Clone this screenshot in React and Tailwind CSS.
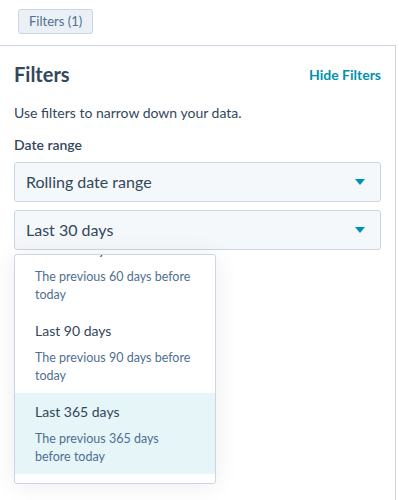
import React from 'react';

const font = { fontFamily: 'Lato, "Open Sans", sans-serif' };

function Caret() {
  return (
    <svg width="10" height="6" viewBox="0 0 10 6" className="shrink-0">
      <path d="M0 0h10L5 6z" fill="#0091ae" />
    </svg>
  );
}

function Select({ label }) {
  return (
    <div className="h-[40px] rounded-[3px] border border-[#cbd6e2] bg-[#f5f8fa] flex items-center justify-between pl-[11px] pr-[15px]">
      <span className="text-[16px] text-[#33475b] leading-[22px]">{label}</span>
      <Caret />
    </div>
  );
}

const options = [
  { title: 'Last 60 days', desc: ['The previous 60 days before', 'today'] },
  { title: 'Last 90 days', desc: ['The previous 90 days before', 'today'] },
  { title: 'Last 365 days', desc: ['The previous 365 days', 'before today'], active: true },
];

export default function App() {
  return (
    <div style={font} className="relative w-[399px] h-[500px] bg-white overflow-hidden">
      <div className="h-[45px] pl-[18px] pt-[8px]">
        <button className="h-[25px] px-[10px] rounded-[3px] border border-[#cbd6e2] bg-[#eaf0f6] text-[13px] text-[#516f90] leading-none">
          Filters (1)
        </button>
      </div>

      <div className="w-[396px] h-[455px] border-t border-r border-[#cbd6e2] px-[14px]">
        <div className="flex items-center justify-between pt-[14px] h-[42px]">
          <h2 className="text-[20px] font-bold text-[#33475b] leading-[28px]">Filters</h2>
          <a className="text-[14px] font-bold text-[#0091ae] leading-[20px] mt-[2px]">Hide Filters</a>
        </div>
        <p className="mt-[15px] text-[14px] text-[#33475b] leading-[20px]">Use filters to narrow down your data.</p>
        <div className="mt-[12px] text-[14px] font-semibold text-[#33475b] leading-[20px]">Date range</div>
        <div className="mt-[7px] flex flex-col gap-[8px]">
          <Select label="Rolling date range" />
          <Select label="Last 30 days" />
        </div>
      </div>

      <div className="absolute left-[14px] top-[254px] w-[202px] h-[230px] bg-white border border-[#cbd6e2] rounded-[3px] shadow-[0_1px_24px_0_rgba(0,0,0,0.08)] overflow-hidden">
        <div className="mt-[-24px]">
          {options.map((o) => (
            <div
              key={o.title}
              className={`pl-[20px] pr-[10px] pt-[8px] pb-[8px] ${o.active ? 'bg-[#e5f5f8]' : ''}`}
            >
              <div className="text-[14px] text-[#33475b] leading-[22px]">{o.title}</div>
              <div className="mt-[7px] text-[12.5px] text-[#516f90] leading-[18px]">
                {o.desc.map((d) => (
                  <div key={d}>{d}</div>
                ))}
              </div>
            </div>
          ))}
        </div>
      </div>
    </div>
  );
}
